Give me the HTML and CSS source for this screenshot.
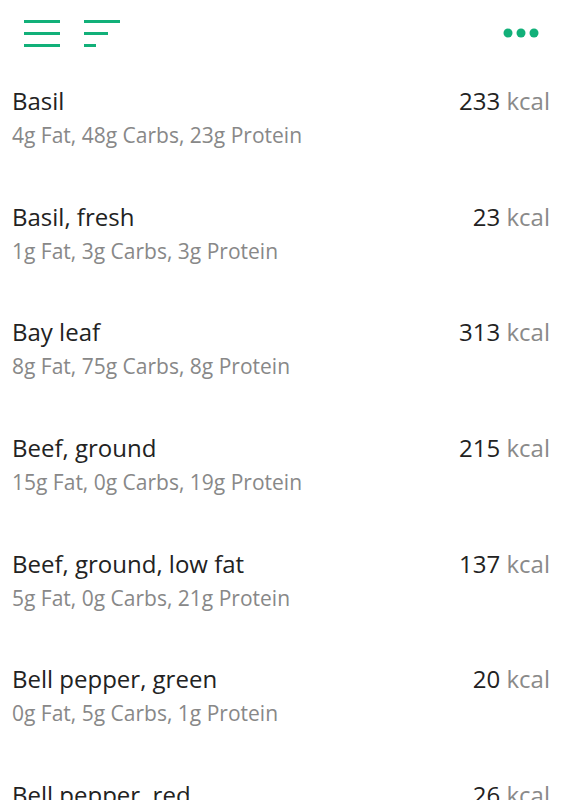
FILE: index.html
```html
<!DOCTYPE html>
<html>
<head>
<meta charset="utf-8">
<link rel="stylesheet" href="styles.css">
</head>
<body>
<header class="topbar">
  <div class="left-icons">
    <svg class="icon" width="36" height="30" viewBox="0 0 36 30">
      <rect x="0" y="3" width="36" height="3" fill="#12b079"/>
      <rect x="0" y="15" width="36" height="3" fill="#12b079"/>
      <rect x="0" y="27" width="36" height="3" fill="#12b079"/>
    </svg>
    <svg class="icon" width="36" height="30" viewBox="0 0 36 30">
      <rect x="0" y="3" width="36" height="3" fill="#12b079"/>
      <rect x="0" y="15" width="24" height="3" fill="#12b079"/>
      <rect x="0" y="27" width="12" height="3" fill="#12b079"/>
    </svg>
  </div>
  <svg class="more" width="40" height="12" viewBox="0 0 40 12">
    <circle cx="5" cy="6" r="4.5" fill="#12b079"/>
    <circle cx="18" cy="6" r="4.5" fill="#12b079"/>
    <circle cx="31" cy="6" r="4.5" fill="#12b079"/>
  </svg>
</header>
<main class="list">
  <div class="row"><div class="line"><span class="name">Basil</span><span class="kcal">233 <span class="unit">kcal</span></span></div><div class="macros">4g Fat, 48g Carbs, 23g Protein</div></div>
  <div class="row"><div class="line"><span class="name">Basil, fresh</span><span class="kcal">23 <span class="unit">kcal</span></span></div><div class="macros">1g Fat, 3g Carbs, 3g Protein</div></div>
  <div class="row"><div class="line"><span class="name">Bay leaf</span><span class="kcal">313 <span class="unit">kcal</span></span></div><div class="macros">8g Fat, 75g Carbs, 8g Protein</div></div>
  <div class="row"><div class="line"><span class="name">Beef, ground</span><span class="kcal">215 <span class="unit">kcal</span></span></div><div class="macros">15g Fat, 0g Carbs, 19g Protein</div></div>
  <div class="row"><div class="line"><span class="name">Beef, ground, low fat</span><span class="kcal">137 <span class="unit">kcal</span></span></div><div class="macros">5g Fat, 0g Carbs, 21g Protein</div></div>
  <div class="row"><div class="line"><span class="name">Bell pepper, green</span><span class="kcal">20 <span class="unit">kcal</span></span></div><div class="macros">0g Fat, 5g Carbs, 1g Protein</div></div>
  <div class="row"><div class="line"><span class="name">Bell pepper, red</span><span class="kcal">26 <span class="unit">kcal</span></span></div><div class="macros">0g Fat, 6g Carbs, 1g Protein</div></div>
</main>
</body>
</html>
```

FILE: styles.css
```css
html, body {
  margin: 0;
  padding: 0;
  background: #fff;
  font-family: "Open Sans", sans-serif;
  overflow: hidden;
}
.topbar {
  height: 70px;
  box-sizing: border-box;
  display: flex;
  align-items: center;
  justify-content: space-between;
  padding: 0 20px 0 24px;
}
.left-icons {
  display: flex;
  gap: 24px;
  margin-top: -6px;
}
.icon { display: block; }
.more { display: block; margin-top: -4px; }
.row {
  height: 115.7px;
  box-sizing: border-box;
  padding: 15px 13px 0 12px;
}
.line {
  display: flex;
  justify-content: space-between;
  line-height: 32px;
  font-size: 24px;
  color: #222;
}
.unit { color: #8a8a8a; }
.macros {
  margin-top: 3px;
  line-height: 30px;
  font-size: 21px;
  color: #888;
}
```
